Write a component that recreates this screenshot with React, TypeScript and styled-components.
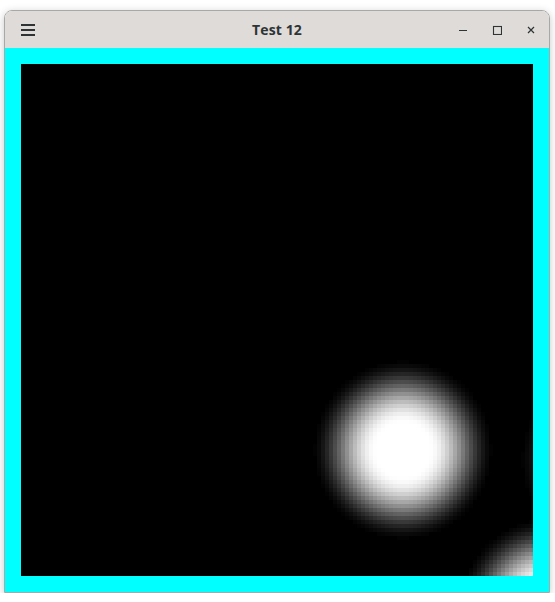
import React, { useMemo } from "react";
import styled, { createGlobalStyle } from "styled-components";

const GlobalStyle = createGlobalStyle`
  html, body {
    margin: 0;
    padding: 0;
    background: #ffffff;
  }
`;

const Page = styled.div`
  padding: 10px 0 0 4px;
`;

const Window = styled.div`
  width: 544px;
  border: 1px solid #a8a8a8;
  border-radius: 8px 8px 0 0;
  overflow: hidden;
  box-shadow: 0 2px 8px rgba(0, 0, 0, 0.22);
`;

const TitleBar = styled.div`
  height: 37px;
  display: grid;
  grid-template-columns: 1fr auto 1fr;
  align-items: center;
  background: #dedbd8;
  color: #2e3436;
`;

const Title = styled.div`
  font-family: "Open Sans", "Noto Sans", sans-serif;
  font-weight: 700;
  font-size: 14px;
  letter-spacing: 0.1px;
`;

const LeftGroup = styled.div`
  display: flex;
  align-items: center;
  padding-left: 11px;
`;

const RightGroup = styled.div`
  display: flex;
  align-items: center;
  justify-content: flex-end;
  gap: 10px;
  padding-right: 6px;
`;

const IconButton = styled.div`
  width: 24px;
  height: 24px;
  display: flex;
  align-items: center;
  justify-content: center;
  color: #2e3436;
`;

const Hamburger = styled.div`
  display: flex;
  flex-direction: column;
  gap: 3px;
`;

const Bar = styled.span`
  display: block;
  width: 14px;
  height: 2px;
  background: #2e3436;
`;

const Content = styled.div`
  background: #00ffff;
  padding: 16px;
`;

const Canvas = styled.div`
  width: 512px;
  height: 512px;
  background: #000000;
  svg {
    display: block;
  }
`;

type Blob = { x: number; y: number; w: number };

const BLOBS: Blob[] = [
  { x: 382, y: 386, w: 1 },
  { x: 528, y: 544, w: 1 },
  { x: 588, y: 395, w: 0.5 },
];

const R0 = 26;
const R1 = 92;
const CELL = 4;

function falloff(r: number) {
  const t = Math.min(1, Math.max(0, (R1 - r) / (R1 - R0)));
  return t * t * (3 - 2 * t);
}

function buildCells() {
  const cells: { x: number; y: number; v: number }[] = [];
  const n = 512 / CELL;
  for (let j = 0; j < n; j++) {
    for (let i = 0; i < n; i++) {
      const cx = i * CELL + CELL / 2;
      const cy = j * CELL + CELL / 2;
      let v = 0;
      for (const b of BLOBS) v += b.w * falloff(Math.hypot(cx - b.x, cy - b.y));
      v = Math.min(1, v);
      if (v > 0.01) cells.push({ x: i * CELL, y: j * CELL, v });
    }
  }
  return cells;
}

const BlobField: React.FC = () => {
  const cells = useMemo(buildCells, []);
  return (
    <svg width="512" height="512" viewBox="0 0 512 512" shapeRendering="crispEdges">
      {cells.map((c) => {
        const g = Math.round(c.v * 255);
        return (
          <rect
            key={`${c.x}-${c.y}`}
            x={c.x}
            y={c.y}
            width={CELL}
            height={CELL}
            fill={`rgb(${g},${g},${g})`}
          />
        );
      })}
    </svg>
  );
};

const App: React.FC = () => {
  return (
    <Page>
      <GlobalStyle />
      <Window>
        <TitleBar>
          <LeftGroup>
            <IconButton>
              <Hamburger>
                <Bar />
                <Bar />
                <Bar />
              </Hamburger>
            </IconButton>
          </LeftGroup>
          <Title>Test 12</Title>
          <RightGroup>
            <IconButton>
              <svg width="10" height="10" viewBox="0 0 10 10">
                <rect x="1" y="5" width="8" height="1" fill="currentColor" />
              </svg>
            </IconButton>
            <IconButton>
              <svg width="10" height="10" viewBox="0 0 10 10">
                <rect x="1.5" y="1.5" width="8" height="8" fill="none" stroke="currentColor" strokeWidth="1.1" />
              </svg>
            </IconButton>
            <IconButton>
              <svg width="10" height="10" viewBox="0 0 10 10">
                <path d="M2 2 L8 8 M8 2 L2 8" stroke="currentColor" strokeWidth="1.2" />
              </svg>
            </IconButton>
          </RightGroup>
        </TitleBar>
        <Content>
          <Canvas>
            <BlobField />
          </Canvas>
        </Content>
      </Window>
    </Page>
  );
};

export default App;
